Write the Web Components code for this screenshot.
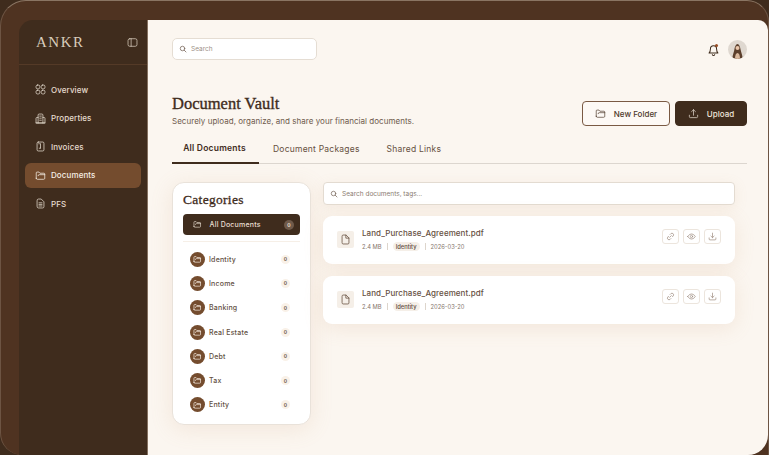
<!DOCTYPE html>
<html><head><meta charset="utf-8">
<style>
html,body{margin:0;padding:0;width:769px;height:455px;overflow:hidden;background:#3f2c1d;font-family:Inter,"Liberation Sans",sans-serif}
</style></head><body>
<app-frame></app-frame>
<script>
const ICONS={
 overview:'<rect x="1.500" y="1.500" width="5.500" height="5.500" rx="2.200"/><rect x="9" y="1.500" width="5.500" height="5.500" rx="2.200"/><rect x="1.500" y="9" width="5.500" height="5.500" rx="2.200"/><rect x="9" y="9" width="5.500" height="5.500" rx="2.200"/>',
 properties:'<path d="M4.500 14.500V3A1.500 1.500 0 0 1 6 1.500h4A1.500 1.500 0 0 1 11.500 3v11.500"/><path d="M4.500 6.500H2.700a1.200 1.200 0 0 0-1.200 1.200v6.800h13V7.700a1.200 1.200 0 0 0-1.200-1.200h-1.800"/><path d="M6.800 4.500h2.400M6.800 7.500h2.400M6.800 10.500h2.400M1.500 14.500h13"/>',
 invoices:'<rect x="3" y="1.500" width="10" height="13" rx="1.800"/><path d="M8 4v6M6.200 10.500H8M5.500 4h1"/>',
 folder:'<path d="M1.800 12V4.200a1.200 1.200 0 0 1 1.200-1.200h2.800l1.400 1.700h5.800a1.200 1.200 0 0 1 1.200 1.200V12a1.500 1.500 0 0 1-1.500 1.500H3.300A1.500 1.500 0 0 1 1.800 12Z"/><path d="M4.500 8.300a1.500 1.500 0 0 1 1.500-1.500h8.200"/>',
 pfs:'<path d="M3 3.500A2 2 0 0 1 5 1.500h4L13 5.500v7a2 2 0 0 1-2 2H5a2 2 0 0 1-2-2Z"/><path d="M5.800 7h4.400M5.800 9.300h4.400M5.800 11.600h4.400"/>',
 panel:'<rect x="1.500" y="2.500" width="13" height="11" rx="2.500"/><path d="M6 2.500v11"/>',
 search:'<circle cx="7" cy="7" r="4.500"/><path d="m10.500 10.500 3.500 3.500"/>',
 bell:'<path d="M2.500 12.300c1-1 1.700-2.300 1.700-5a3.800 3.800 0 0 1 7.600 0c0 2.700.7 4 1.700 5Z"/><path d="M6.500 14.300a1.600 1.600 0 0 0 3 0"/>',
 upload:'<path d="M8 10.500V2.500M5.200 5.200 8 2.500l2.800 2.700"/><path d="M2 10.500v2a1.500 1.500 0 0 0 1.500 1.500h9a1.500 1.500 0 0 0 1.500-1.500v-2"/>',
 file:'<path d="M3 3a1.500 1.500 0 0 1 1.500-1.500h4.300L13 5.700V13a1.500 1.500 0 0 1-1.500 1.500h-7A1.500 1.500 0 0 1 3 13Z"/><path d="M8.500 1.700V6H13"/>',
 link:'<path d="M6.500 9.500l3-3"/><path d="M7.300 4.300 8.600 3a2.900 2.900 0 0 1 4.100 4.100l-1.300 1.300"/><path d="M8.700 11.700 7.400 13a2.900 2.900 0 0 1-4.100-4.100l1.300-1.300"/>',
 eye:'<path d="M1.300 8S3.700 3.500 8 3.500 14.700 8 14.700 8 12.300 12.500 8 12.500 1.300 8 1.300 8Z"/><circle cx="8" cy="8" r="2"/>',
 download:'<path d="M8 2v8M5.200 7.300 8 10l2.800-2.700"/><path d="M2 10.500v2a1.500 1.500 0 0 0 1.500 1.500h9a1.500 1.500 0 0 0 1.500-1.500v-2"/>'
};
function def(name,css,html){
 customElements.define(name,class extends HTMLElement{
  connectedCallback(){
   if(this.shadowRoot)return;
   const r=this.attachShadow({mode:'open'});
   r.innerHTML='<style>'+css+'</style>'+(typeof html==='function'?html(this):html);
  }
 });
}
def('x-icon',':host{display:inline-flex;flex:none;width:var(--s,10px);height:var(--s,10px)}svg{width:100%;height:100%;fill:none;stroke:currentColor;stroke-width:var(--w,1.300);stroke-linecap:round;stroke-linejoin:round}',
 e=>'<svg viewBox="0 0 16 16">'+ICONS[e.getAttribute('name')]+'</svg>');
def('nav-item',`:host{display:flex;align-items:center;gap:5px;height:25px;padding-left:10px;border-radius:6px;font-size:8px;font-weight:500;color:#e6dccf;letter-spacing:.1px;--s:11px;--w:1.100}
:host([active]){background:#744c2e;color:#f6efe6}`,'<slot name="i"></slot><slot></slot>');
def('side-bar',`:host{display:flex;flex-direction:column;width:129px;flex:none;background:#3f2c1d;border-radius:14px 0 0 0;border-right:1px solid #84705f;box-sizing:border-box}
.top{height:45px;box-sizing:border-box;border-bottom:1px solid #543a27;display:flex;align-items:center;justify-content:space-between;padding:4px 9px 4px 17px;flex:none;color:#d8ccbd}
.logo{font:500 15px "Liberation Serif",serif;letter-spacing:1.500px;color:#d9ccbc}
nav{display:flex;flex-direction:column;gap:3.500px;padding:12px 6px 0 6px}
x-icon{--s:11px;--w:1.100}`,
 ()=>`<div class="top"><span class="logo">ANKR</span><x-icon name="panel"></x-icon></div><nav>
 <nav-item><x-icon slot="i" name="overview"></x-icon>Overview</nav-item>
 <nav-item><x-icon slot="i" name="properties"></x-icon>Properties</nav-item>
 <nav-item><x-icon slot="i" name="invoices"></x-icon>Invoices</nav-item>
 <nav-item active><x-icon slot="i" name="folder"></x-icon>Documents</nav-item>
 <nav-item><x-icon slot="i" name="pfs"></x-icon>PFS</nav-item></nav>`);
def('top-bar',`:host{display:flex;align-items:center;justify-content:space-between;height:22px;flex:none}
.s{width:145px;height:22px;box-sizing:border-box;background:#fff;border:1px solid #e5ddd3;border-radius:5px;display:flex;align-items:center;gap:4px;padding-left:6px;font-size:6.500px;color:#9c9087;--s:8px;--w:1.600}
.s x-icon{color:#7b6a5e}
.r{display:flex;align-items:center;gap:8px;color:#3f2c1d;--s:13px;--w:1.250}
.b{position:relative;display:flex}
.b i{position:absolute;right:2px;top:1px;width:3px;height:3px;border-radius:50%;background:#9a4e24}
svg.av{width:19px;height:19px;border-radius:50%;display:block}`,
 ()=>`<div class="s"><x-icon name="search"></x-icon>Search</div><div class="r"><span class="b"><x-icon name="bell"></x-icon><i></i></span>
 <svg class="av" viewBox="0 0 19 19"><rect width="19" height="19" fill="#dfd8d0"/><path d="M4.500 19c-.2-4 1.300-6 1.800-9 .4-3 1.700-6 3.200-6s2.800 3 3.200 6c.5 3 2 5 1.800 9Z" fill="#5b3f2c"/><circle cx="9.500" cy="8" r="2" fill="#e9c6ab"/><path d="M7 19c0-4 1-6 2.500-6S12 15 12 19Z" fill="#d9b89d"/></svg></div>`);
def('x-btn',`:host{display:flex;align-items:center;justify-content:center;gap:8px;box-sizing:border-box;height:25px;border-radius:4px;font-size:8px;font-weight:500;--s:11px;--w:1;border:1px solid #7a5a44;color:#4f3a2b;background:#fdf9f5}
:host([dark]){background:#3f2c1d;border-color:#3f2c1d;color:#efe6db}`,'<slot name="i"></slot><slot></slot>');
def('page-head',`:host{display:flex;justify-content:space-between;align-items:flex-start;margin-top:33px;flex:none}
h1{margin:0;font:400 16.500px/20px "Liberation Serif",serif;color:#3f2c1d;letter-spacing:0;-webkit-text-stroke:.35px #3f2c1d;padding-top:1px}
p{margin:2px 0 0;font-size:8px;line-height:10px;color:#6e5a4c;letter-spacing:.03px}
.a{display:flex;gap:5px;margin-top:8px}`,
 ()=>`<div><h1>Document Vault</h1><p>Securely upload, organize, and share your financial documents.</p></div>
 <div class="a"><x-btn style="width:88px"><x-icon slot="i" name="folder"></x-icon>New Folder</x-btn><x-btn dark style="width:72px"><x-icon slot="i" name="upload"></x-icon>Upload</x-btn></div>`);
def('tab-bar',`:host{display:flex;height:26px;margin-top:11px;border-bottom:1px solid #dcd6cf;box-sizing:content-box;flex:none;font-size:8.500px;color:#66503f;letter-spacing:.22px}
span{display:flex;align-items:center;justify-content:center;padding:0 10px;height:26px;box-sizing:border-box;padding-bottom:3px;margin-right:7px}
.on{color:#3f2c1d;font-weight:600;border-bottom:2px solid #3f2c1d;margin-bottom:-1px;height:27px;width:87px;padding:0 2px 4px 0;margin-right:4px}`,
 ()=>`<span class="on">All Documents</span><span>Document Packages</span><span>Shared Links</span>`);
def('cat-row',`:host{display:flex;align-items:center;height:24.300px;padding:0 10px 0 7px;font-size:7px;color:#63503f;font-weight:500;letter-spacing:.2px}
.c{width:15px;height:15px;border-radius:50%;background:#744c2e;color:#f7eee4;display:flex;align-items:center;justify-content:center;--s:8.500px;--w:1.300;margin-right:4px}
.t{flex:1}
.n{width:9px;height:9px;border-radius:50%;background:#f9f1e8;display:flex;align-items:center;justify-content:center;font-size:5px;font-weight:600;color:#66503f}`,
 e=>`<span class="c"><x-icon name="folder"></x-icon></span><span class="t"><slot></slot></span><span class="n">0</span>`);
def('cat-card',`:host{display:block;width:139px;height:243px;box-sizing:border-box;background:#fff;border:1px solid #e9e2da;border-radius:12px;padding:8px 10px 0;flex:none;box-shadow:0 4px 22px rgba(196,150,105,.16)}
h2{margin:0;font:400 13.500px/17px "Liberation Serif",serif;color:#3f2c1d;letter-spacing:.3px;-webkit-text-stroke:.3px #3f2c1d}
.all{display:flex;align-items:center;height:21px;margin-top:6px;background:#3f2c1d;border-radius:4px;color:#eadfd2;font-size:7px;font-weight:500;padding:0 6px 0 10px;letter-spacing:.2px;--s:8.500px;--w:1.200}
.all x-icon{margin-right:8px}.all b{flex:1;font-weight:500}
.all i{width:10px;height:10px;border-radius:50%;background:#6f5a4a;font:600 5px/10px Inter,sans-serif;text-align:center;color:#efe6db}
hr{border:0;border-top:1px solid #f6efe7;margin:6px 0 5px}`,
 ()=>`<h2>Categories</h2><div class="all"><x-icon name="folder"></x-icon><b>All Documents</b><i>0</i></div><hr>
 <cat-row>Identity</cat-row><cat-row>Income</cat-row><cat-row>Banking</cat-row><cat-row>Real Estate</cat-row><cat-row>Debt</cat-row><cat-row>Tax</cat-row><cat-row>Entity</cat-row>`);
def('doc-search',`:host{display:flex;align-items:center;gap:4px;height:23px;box-sizing:border-box;background:#fff;border:1px solid #e3dbd1;border-radius:4px;padding-left:6px;font-size:6.500px;color:#8a7b70;--s:8px;--w:1.500;box-shadow:0 3px 14px rgba(196,150,105,.12)}
x-icon{color:#7b6a5e}`,()=>`<x-icon name="search"></x-icon>Search documents, tags...`);
def('doc-card',`:host{display:flex;align-items:center;height:48px;box-sizing:border-box;background:#fff;border-radius:9px;padding:0 14px 0 14px;box-shadow:0 4px 20px rgba(196,150,105,.16)}
.f{width:17px;height:17px;background:#f5efe8;border-radius:2px;display:flex;align-items:center;justify-content:center;color:#6f5a4a;--s:11px;--w:1.200;margin:-1px 8px 0 0;flex:none}
.m{flex:1;display:flex;flex-direction:column;gap:4px;margin-top:-2px}
.t{font-size:8px;line-height:11px;font-weight:500;color:#66503f;letter-spacing:.07px}
.d{display:flex;align-items:center;font-size:5.800px;color:#85756a;height:8px}
.d u{width:1px;height:7px;background:#ddd5cc;margin:0 5px}
.d em{font-style:normal;background:#f5efe8;border-radius:5px;padding:1px 3px;color:#5e4a3b;font-weight:500}
.a{display:flex;gap:4px;margin-top:-8px}
.a span{width:17px;height:15px;box-sizing:border-box;border:1px solid #ece5dd;border-radius:3px;display:flex;align-items:center;justify-content:center;color:#a08f82;--s:9px;--w:1.300}`,
 ()=>`<span class="f"><x-icon name="file"></x-icon></span><div class="m"><div class="t">Land_Purchase_Agreement.pdf</div><div class="d">2.4 MB<u></u><em>Identity</em><u></u>2026-03-20</div></div>
 <div class="a"><span><x-icon name="link"></x-icon></span><span><x-icon name="eye"></x-icon></span><span><x-icon name="download"></x-icon></span></div>`);
def('doc-panel',`:host{display:flex;width:575px;gap:12px;margin-top:18px;flex:none}
.r{width:412px;display:flex;flex-direction:column;gap:12px}
.r doc-search{margin-bottom:-1px}`,
 ()=>`<cat-card></cat-card><div class="r"><doc-search></doc-search><doc-card></doc-card><doc-card></doc-card></div>`);
def('main-view',`:host{display:flex;flex-direction:column;flex:1;min-width:0;background:#fbf6f0;padding:18px 21px 0 24px;border-radius:0 10px 20px 0;overflow:hidden}`,
 ()=>`<top-bar></top-bar><page-head></page-head><tab-bar></tab-bar><doc-panel></doc-panel>`);
def('app-frame',`:host{display:block;width:769px;height:455px;overflow:hidden;background:#3f2c1d}
.o{box-sizing:border-box;width:769px;height:455px;background:#4f3321;border-top:1px solid #8a7563;border-left:1px solid #6d5443;border-right:1px solid #6d5443;border-radius:26px 22px 0 22px;padding:19px 0 0 18px;display:flex}
.i{display:flex;flex:1;height:435px}`,
 ()=>`<div class="o"><div class="i"><side-bar></side-bar><main-view></main-view></div></div>`);
</script>
</body></html>
